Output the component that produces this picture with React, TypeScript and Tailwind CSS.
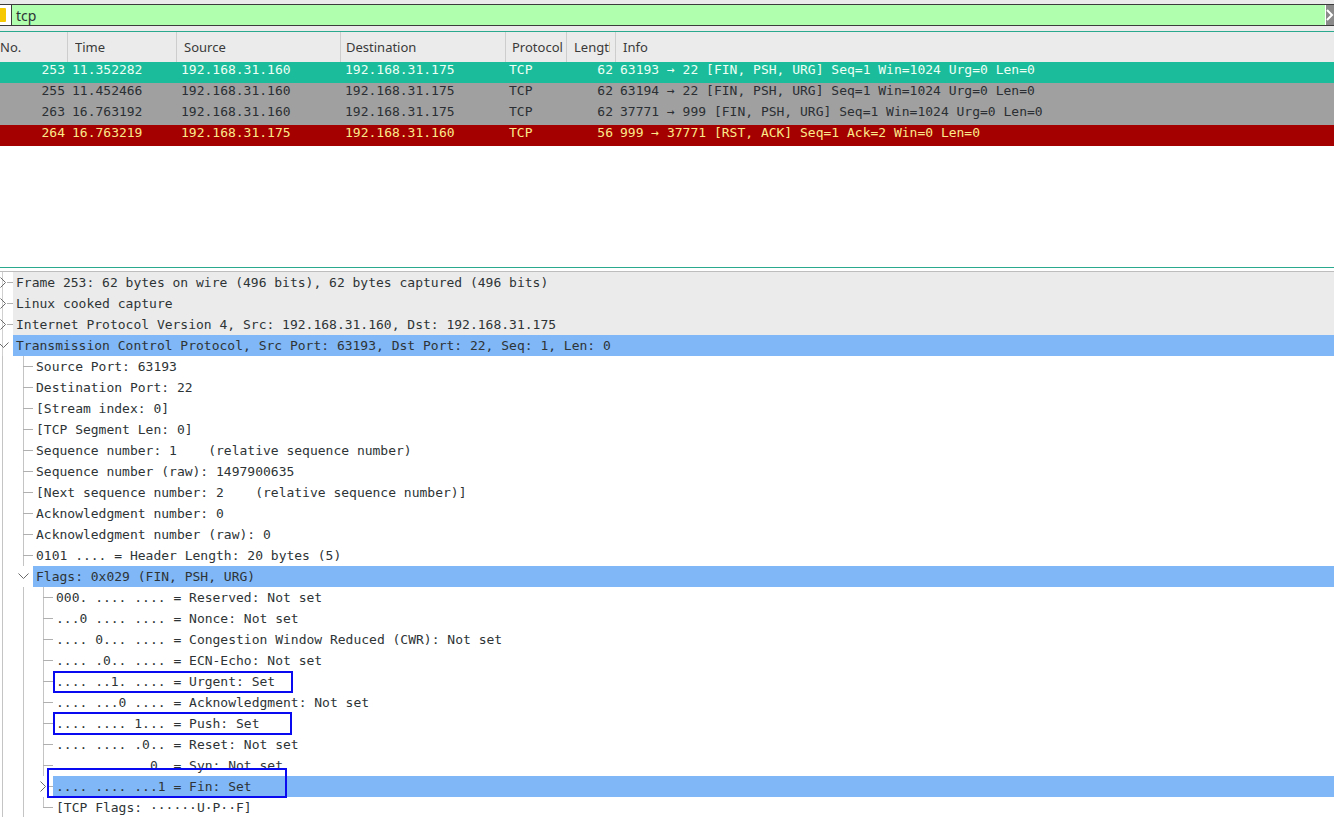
import React from "react";

const mono = { fontFamily: '"DejaVu Sans Mono", "Liberation Mono", monospace' };
const sans = { fontFamily: '"Noto Sans", "Open Sans", sans-serif' };

const packets = [
  {
    no: "253",
    time: "11.352282",
    src: "192.168.31.160",
    dst: "192.168.31.175",
    proto: "TCP",
    len: "62",
    info: "63193 → 22 [FIN, PSH, URG] Seq=1 Win=1024 Urg=0 Len=0",
    row: "bg-[#1abc9c] text-[#eefff4]",
  },
  {
    no: "255",
    time: "11.452466",
    src: "192.168.31.160",
    dst: "192.168.31.175",
    proto: "TCP",
    len: "62",
    info: "63194 → 22 [FIN, PSH, URG] Seq=1 Win=1024 Urg=0 Len=0",
    row: "bg-[#a0a0a0] text-[#2b2f33]",
  },
  {
    no: "263",
    time: "16.763192",
    src: "192.168.31.160",
    dst: "192.168.31.175",
    proto: "TCP",
    len: "62",
    info: "37771 → 999 [FIN, PSH, URG] Seq=1 Win=1024 Urg=0 Len=0",
    row: "bg-[#a0a0a0] text-[#2b2f33]",
  },
  {
    no: "264",
    time: "16.763219",
    src: "192.168.31.175",
    dst: "192.168.31.160",
    proto: "TCP",
    len: "56",
    info: "999 → 37771 [RST, ACK] Seq=1 Ack=2 Win=0 Len=0",
    row: "bg-[#a40000] text-[#fce98a]",
  },
];

type Node = {
  level: number;
  text: string;
  exp?: "open" | "closed";
  bg?: string;
  last?: boolean;
};

const tree: Node[] = [
  { level: 0, text: "Frame 253: 62 bytes on wire (496 bits), 62 bytes captured (496 bits)", exp: "closed", bg: "bg-[#ebebeb]" },
  { level: 0, text: "Linux cooked capture", exp: "closed", bg: "bg-[#ebebeb]" },
  { level: 0, text: "Internet Protocol Version 4, Src: 192.168.31.160, Dst: 192.168.31.175", exp: "closed", bg: "bg-[#ebebeb]" },
  { level: 0, text: "Transmission Control Protocol, Src Port: 63193, Dst Port: 22, Seq: 1, Len: 0", exp: "open", bg: "bg-[#80b7f6]" },
  { level: 1, text: "Source Port: 63193" },
  { level: 1, text: "Destination Port: 22" },
  { level: 1, text: "[Stream index: 0]" },
  { level: 1, text: "[TCP Segment Len: 0]" },
  { level: 1, text: "Sequence number: 1    (relative sequence number)" },
  { level: 1, text: "Sequence number (raw): 1497900635" },
  { level: 1, text: "[Next sequence number: 2    (relative sequence number)]" },
  { level: 1, text: "Acknowledgment number: 0" },
  { level: 1, text: "Acknowledgment number (raw): 0" },
  { level: 1, text: "0101 .... = Header Length: 20 bytes (5)" },
  { level: 1, text: "Flags: 0x029 (FIN, PSH, URG)", exp: "open", bg: "bg-[#80b7f6]" },
  { level: 2, text: "000. .... .... = Reserved: Not set" },
  { level: 2, text: "...0 .... .... = Nonce: Not set" },
  { level: 2, text: ".... 0... .... = Congestion Window Reduced (CWR): Not set" },
  { level: 2, text: ".... .0.. .... = ECN-Echo: Not set" },
  { level: 2, text: ".... ..1. .... = Urgent: Set" },
  { level: 2, text: ".... ...0 .... = Acknowledgment: Not set" },
  { level: 2, text: ".... .... 1... = Push: Set" },
  { level: 2, text: ".... .... .0.. = Reset: Not set" },
  { level: 2, text: ".... .... ..0. = Syn: Not set" },
  { level: 2, text: ".... .... ...1 = Fin: Set", exp: "closed", bg: "bg-[#80b7f6]" },
  { level: 2, text: "[TCP Flags: ······U·P··F]", last: true },
];

const Chevron = ({ open }: { open: boolean }) =>
  open ? (
    <svg width="11" height="7" viewBox="0 0 11 7" className="absolute left-[-2px] top-[7px]">
      <polyline points="0.5,0.5 5.5,5.5 10.5,0.5" fill="none" stroke="#6b6b6b" strokeWidth="1" />
    </svg>
  ) : (
    <svg width="7" height="11" viewBox="0 0 7 11" className="absolute left-0 top-[5px]">
      <polyline points="0.5,0.5 5.5,5.5 0.5,10.5" fill="none" stroke="#6b6b6b" strokeWidth="1" />
    </svg>
  );

const TreeRow = ({ node }: { node: Node }) => {
  const indents = Array.from({ length: node.level });
  return (
    <div className="flex h-[21px] items-stretch">
      {indents.map((_, i) => (
        <div key={i} className="relative w-[20px] shrink-0">
          <div className={`absolute top-0 bottom-0 w-px bg-[#c4c4c4] ${i === 0 ? "left-[2px]" : "left-[3px]"}`} />
        </div>
      ))}
      <div className="relative w-[13px] shrink-0">
        {node.level > 0 && !node.exp && (
          <div className={`absolute left-[3px] top-0 w-px bg-[#c4c4c4] ${node.last ? "h-[11px]" : "bottom-0"}`} />
        )}
        {node.level === 0 && <div className="absolute left-[2px] top-0 bottom-0 w-px bg-[#d0d0d0]" />}
        {node.exp ? (
          <>
            <Chevron open={node.exp === "open"} />
            {node.exp === "closed" && <div className="absolute left-[7px] top-[10px] h-px w-[6px] bg-[#b0b0b0]" />}
          </>
        ) : (
          <div className="absolute left-[3px] top-[10px] h-px w-[10px] bg-[#b0b0b0]" />
        )}
      </div>
      <div
        className={`flex-1 whitespace-pre pl-[3px] text-[13px] leading-[21px] text-[#2e3436] ${node.bg ?? ""}`}
        style={mono}
      >
        {node.text}
      </div>
    </div>
  );
};

const headers = [
  { label: "No.", w: "w-[68px]", pl: "pl-0" },
  { label: "Time", w: "w-[109px]", pl: "pl-[7px]" },
  { label: "Source", w: "w-[164px]", pl: "pl-[7px]" },
  { label: "Destination", w: "w-[165px]", pl: "pl-[5px]" },
  { label: "Protocol", w: "w-[61px]", pl: "pl-[6px]" },
  { label: "Length", w: "w-[49px]", pl: "pl-[7px] pr-[5px]" },
];

export default function App() {
  return (
    <div className="h-[817px] w-[1334px] overflow-hidden bg-white">
      {/* display filter toolbar */}
      <div className="h-[31px] bg-[#ebebeb] pt-[4px]">
        <div className="flex h-[22px] border-y border-[#3c3c3c] bg-white">
          <div className="flex w-[11px] items-center">
            <div className="h-[14px] w-[6px] rounded-r-[1px] bg-[#f5c800]" />
          </div>
          <div className="w-px bg-[#3c3c3c]" />
          <div
            className="flex flex-1 items-center bg-[#afffaf] pl-[4px] text-[14px] text-[#2e3436]"
            style={sans}
          >
            tcp
          </div>
          <div className="w-px bg-white" />
          <div className="flex w-[8px] items-center bg-[#8a8a8a]">
            <svg width="8" height="12" viewBox="0 0 8 12">
              <polyline points="1,1 6,6 1,11" fill="none" stroke="#fff" strokeWidth="2" />
            </svg>
          </div>
        </div>
      </div>
      <div className="h-px bg-[#2aa98f]" />

      {/* packet list header */}
      <div className="flex h-[30px] bg-[#ebebeb] text-[13px] text-[#3a3a3a]" style={sans}>
        {headers.map((h) => (
          <div
            key={h.label}
            className={`${h.w} ${h.pl} flex h-full shrink-0 items-center overflow-hidden whitespace-nowrap border-r border-[#cdcdcd] pt-[2px]`}
          >
            <span className="min-w-0 overflow-hidden">{h.label}</span>
          </div>
        ))}
        <div className="flex h-full flex-1 items-center pl-[7px] pt-[2px]">Info</div>
      </div>

      {/* packet rows */}
      <div className="text-[13px] leading-[15px]" style={mono}>
        {packets.map((p) => (
          <div key={p.no} className={`flex h-[21px] whitespace-pre ${p.row}`}>
            <div className="w-[68px] shrink-0 pr-[3px] text-right">{p.no}</div>
            <div className="w-[109px] shrink-0 pl-[4px]">{p.time}</div>
            <div className="w-[164px] shrink-0 pl-[4px]">{p.src}</div>
            <div className="w-[165px] shrink-0 pl-[4px]">{p.dst}</div>
            <div className="w-[61px] shrink-0 pl-[3px]">{p.proto}</div>
            <div className="w-[49px] shrink-0 pr-[3px] text-right">{p.len}</div>
            <div className="flex-1 pl-[4px]">{p.info}</div>
          </div>
        ))}
      </div>

      <div className="h-[121px]" />
      <div className="h-px bg-[#2aa98f]" />
      <div className="h-[3px]" />
      <div className="h-px bg-[#bdbdbd]" />

      {/* packet details tree */}
      <div className="relative">
        {tree.map((n, i) => (
          <TreeRow key={i} node={n} />
        ))}
        <div className="absolute left-[53px] top-[399px] h-[22px] w-[240px] border-2 border-[#0a0af0]" />
        <div className="absolute left-[53px] top-[440px] h-[23px] w-[239px] border-2 border-[#0a0af0]" />
        <div className="absolute left-[47px] top-[496px] h-[30px] w-[240px] border-2 border-[#0a0af0]" />
      </div>
    </div>
  );
}
